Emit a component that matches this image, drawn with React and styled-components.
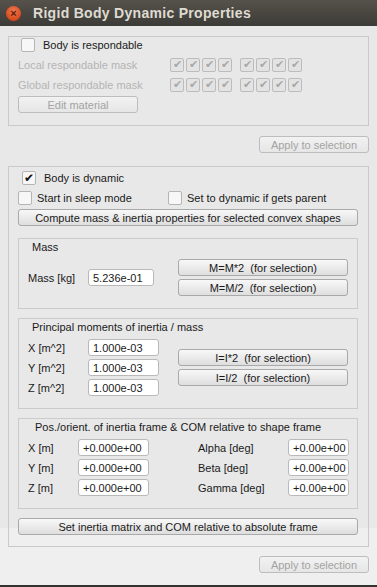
import styled, { createGlobalStyle } from "styled-components";

const GlobalStyle = createGlobalStyle`
  html, body {
    margin: 0;
    padding: 0;
    background: #e8e8e8;
  }
  body {
    font-family: "Liberation Sans", Arial, sans-serif;
    font-size: 11px;
    color: #1a1a1a;
  }
`;

const Window = styled.div`
  width: 377px;
  height: 585px;
  border-bottom: 2px solid #33322e;
  background: linear-gradient(to bottom, #e8e8e8 0, #e8e8e8 528px, #efefef 528px);
  display: flex;
  flex-direction: column;
  overflow: hidden;
`;

const TitleBar = styled.div`
  height: 26px;
  flex: none;
  display: flex;
  align-items: center;
  padding-left: 6px;
  gap: 12px;
  background: linear-gradient(to bottom, #56524b, #3c3b37);
`;

const CloseButton = styled.div`
  width: 15px;
  height: 15px;
  border-radius: 50%;
  background: radial-gradient(circle at 50% 35%, #f07a50, #d84a1c 70%, #b8391a);
  display: flex;
  align-items: center;
  justify-content: center;
  color: #5a1e0c;
  font-size: 11px;
  font-weight: bold;
  line-height: 1;
`;

const Title = styled.div`
  font-family: "Liberation Sans", Arial, sans-serif;
  font-weight: bold;
  font-size: 14px;
  color: #dfdbd2;
  letter-spacing: 0.3px;
`;

const Content = styled.div`
  padding: 10px 8px 0 8px;
  display: flex;
  flex-direction: column;
`;

const GroupBox = styled.div`
  border: 1px solid #c9c9c9;
  display: flex;
  flex-direction: column;
  padding: ${(p) => p.$pad || "0"};
  margin-top: ${(p) => p.$mt || 0}px;
`;

const SubGroup = styled.div`
  border: 1px solid #cbcbcb;
  display: flex;
  flex-direction: column;
  padding: 1px 9px 12px 9px;
  margin-top: ${(p) => p.$mt || 0}px;
`;

const GroupTitle = styled.div`
  height: 15px;
  line-height: 15px;
  padding-left: ${(p) => p.$indent || 4}px;
  margin-bottom: 4px;
`;

const CheckRow = styled.label`
  display: flex;
  align-items: center;
  height: 15px;
  gap: ${(p) => p.$gap || 8}px;
  padding-left: ${(p) => p.$indent || 0}px;
  margin-top: ${(p) => p.$mt || 0}px;
`;

const Box = styled.span`
  width: 12px;
  height: 12px;
  flex: none;
  border: 1px solid ${(p) => (p.$disabled ? "#bcbcbc" : "#b5b5b5")};
  border-radius: 2px;
  background: ${(p) => (p.$disabled ? "#e3e3e3" : "#f7f7f7")};
  color: ${(p) => (p.$disabled ? "#a9a9a9" : "#111")};
  display: flex;
  align-items: center;
  justify-content: center;
  font-size: ${(p) => (p.$disabled ? 11 : 12)}px;
  line-height: 1;
`;

const TwoChecks = styled.div`
  display: flex;
  margin-top: 5px;
  height: 15px;
  align-items: center;
`;

const CheckCell = styled.div`
  width: ${(p) => (p.$w ? `${p.$w}px` : "auto")};
  display: flex;
  align-items: center;
  gap: 5px;
  white-space: nowrap;
`;

const MaskRow = styled.div`
  display: flex;
  align-items: center;
  height: 15px;
  margin-top: 5px;
  padding-left: 9px;
  color: #b4b4b4;
`;

const MaskLabel = styled.div`
  width: 152px;
`;

const MaskGroup = styled.div`
  display: flex;
  gap: 2px;
  margin-right: 8px;
`;

const Button = styled.div`
  height: 15px;
  width: ${(p) => (p.$w ? `${p.$w}px` : "auto")};
  border: 1px solid ${(p) => (p.$disabled ? "#bdbdbd" : "#a9a9a9")};
  border-radius: 3px;
  background: ${(p) =>
    p.$disabled
      ? "linear-gradient(#f2f2f2, #e6e6e6)"
      : "linear-gradient(#f8f8f8, #dedede)"};
  color: ${(p) => (p.$disabled ? "#a3a3a3" : "#1a1a1a")};
  display: flex;
  align-items: center;
  justify-content: center;
  flex: none;
  margin-top: ${(p) => p.$mt || 0}px;
  margin-left: ${(p) => p.$ml || 0}px;
  align-self: ${(p) => p.$align || "stretch"};
  box-sizing: content-box;
`;

const MainRow = styled.div`
  display: flex;
  align-items: center;
  justify-content: space-between;
`;

const ButtonCol = styled.div`
  display: flex;
  flex-direction: column;
  gap: 3px;
`;

const FieldGrid = styled.div`
  display: grid;
  grid-template-columns: ${(p) => p.$cols};
  row-gap: 3px;
  align-items: center;
`;

const FieldLabel = styled.div`
  white-space: nowrap;
`;

const Input = styled.div`
  height: 15px;
  width: ${(p) => p.$w}px;
  box-sizing: content-box;
  border: 1px solid #b9b9b9;
  border-radius: 3px;
  background: #fff;
  display: flex;
  align-items: center;
  padding-left: 4px;
`;

const Check = ({ checked, disabled }) => (
  <Box $disabled={disabled}>{checked ? "✔" : ""}</Box>
);

const Mask = () => (
  <>
    <MaskGroup>
      {[0, 1, 2, 3].map((i) => (
        <Check key={i} checked disabled />
      ))}
    </MaskGroup>
    <MaskGroup>
      {[0, 1, 2, 3].map((i) => (
        <Check key={i} checked disabled />
      ))}
    </MaskGroup>
  </>
);

const App = () => {
  return (
    <Window>
      <GlobalStyle />
      <TitleBar>
        <CloseButton>×</CloseButton>
        <Title>Rigid Body Dynamic Properties</Title>
      </TitleBar>
      <Content>
        <GroupBox $pad="0 0 12px 0">
          <CheckRow $indent={12}>
            <Check />
            <span>Body is respondable</span>
          </CheckRow>
          <MaskRow>
            <MaskLabel>Local respondable mask</MaskLabel>
            <Mask />
          </MaskRow>
          <MaskRow>
            <MaskLabel>Global respondable mask</MaskLabel>
            <Mask />
          </MaskRow>
          <Button $disabled $w={118} $mt={4} $ml={9} $align="flex-start">
            Edit material
          </Button>
        </GroupBox>
        <Button $disabled $w={108} $mt={10} $align="flex-end">
          Apply to selection
        </Button>
        <GroupBox $pad="3px 10px 11px 9px" $mt={13}>
          <CheckRow $indent={4}>
            <Check checked />
            <span>Body is dynamic</span>
          </CheckRow>
          <TwoChecks>
            <CheckCell $w={150}>
              <Check />
              <span>Start in sleep mode</span>
            </CheckCell>
            <CheckCell>
              <Check />
              <span>Set to dynamic if gets parent</span>
            </CheckCell>
          </TwoChecks>
          <Button $mt={4}>Compute mass &amp; inertia properties for selected convex shapes</Button>

          <SubGroup $mt={12}>
            <GroupTitle $indent={4}>Mass</GroupTitle>
            <MainRow>
              <FieldGrid $cols="60px auto">
                <FieldLabel>Mass [kg]</FieldLabel>
                <Input $w={60}>5.236e-01</Input>
              </FieldGrid>
              <ButtonCol>
                <Button $w={168}>M=M*2&nbsp;&nbsp;(for selection)</Button>
                <Button $w={168}>M=M/2&nbsp;&nbsp;(for selection)</Button>
              </ButtonCol>
            </MainRow>
          </SubGroup>

          <SubGroup $mt={9}>
            <GroupTitle $indent={4}>Principal moments of inertia / mass</GroupTitle>
            <MainRow>
              <FieldGrid $cols="60px auto">
                <FieldLabel>X [m^2]</FieldLabel>
                <Input $w={65}>1.000e-03</Input>
                <FieldLabel>Y [m^2]</FieldLabel>
                <Input $w={65}>1.000e-03</Input>
                <FieldLabel>Z [m^2]</FieldLabel>
                <Input $w={65}>1.000e-03</Input>
              </FieldGrid>
              <ButtonCol>
                <Button $w={168}>I=I*2&nbsp;&nbsp;(for selection)</Button>
                <Button $w={168}>I=I/2&nbsp;&nbsp;(for selection)</Button>
              </ButtonCol>
            </MainRow>
          </SubGroup>

          <SubGroup $mt={9}>
            <GroupTitle $indent={7}>
              Pos./orient. of inertia frame &amp; COM relative to shape frame
            </GroupTitle>
            <FieldGrid $cols="50px 120px 90px auto">
              <FieldLabel>X [m]</FieldLabel>
              <Input $w={65}>+0.000e+00</Input>
              <FieldLabel>Alpha [deg]</FieldLabel>
              <Input $w={55}>+0.00e+00</Input>
              <FieldLabel>Y [m]</FieldLabel>
              <Input $w={65}>+0.000e+00</Input>
              <FieldLabel>Beta [deg]</FieldLabel>
              <Input $w={55}>+0.00e+00</Input>
              <FieldLabel>Z [m]</FieldLabel>
              <Input $w={65}>+0.000e+00</Input>
              <FieldLabel>Gamma [deg]</FieldLabel>
              <Input $w={55}>+0.00e+00</Input>
            </FieldGrid>
          </SubGroup>

          <Button $mt={9}>Set inertia matrix and COM relative to absolute frame</Button>
        </GroupBox>
        <Button $disabled $w={108} $mt={9} $align="flex-end">
          Apply to selection
        </Button>
      </Content>
    </Window>
  );
};

export default App;
